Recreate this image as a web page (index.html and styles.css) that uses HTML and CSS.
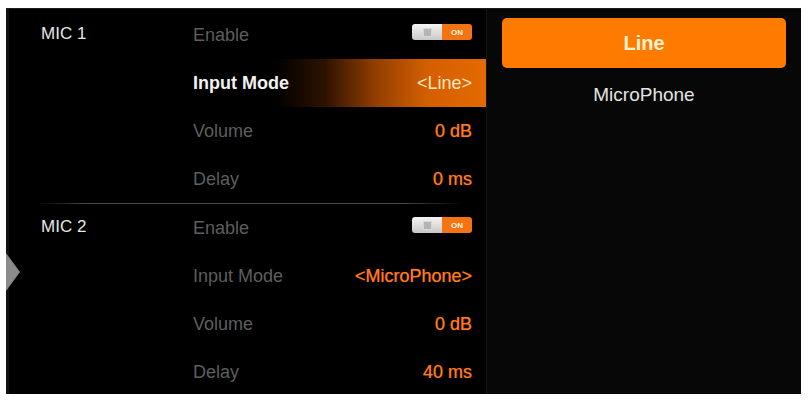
FILE: index.html
```html
<!DOCTYPE html>
<html lang="en">
<head>
    <meta charset="UTF-8">
    <meta name="viewport" content="width=device-width, initial-scale=1.0">
    <title>Audio Input Settings</title>
    <link rel="stylesheet" href="styles.css">
</head>
<body>
    <div class="screen">
        <div class="side-arrow"></div>

        <div class="settings">
            <div class="mic">
                <div class="mic-name">MIC 1</div>
                <div class="rows">
                    <div class="row">
                        <span class="label">Enable</span>
                        <span class="toggle"><span class="knob"><i></i></span><span class="on">ON</span></span>
                    </div>
                    <div class="row active">
                        <span class="label">Input Mode</span>
                        <span class="value">&lt;Line&gt;</span>
                    </div>
                    <div class="row">
                        <span class="label">Volume</span>
                        <span class="value">0 dB</span>
                    </div>
                    <div class="row">
                        <span class="label">Delay</span>
                        <span class="value">0 ms</span>
                    </div>
                </div>
            </div>

            <div class="divider"></div>

            <div class="mic">
                <div class="mic-name">MIC 2</div>
                <div class="rows">
                    <div class="row">
                        <span class="label">Enable</span>
                        <span class="toggle"><span class="knob"><i></i></span><span class="on">ON</span></span>
                    </div>
                    <div class="row">
                        <span class="label">Input Mode</span>
                        <span class="value">&lt;MicroPhone&gt;</span>
                    </div>
                    <div class="row">
                        <span class="label">Volume</span>
                        <span class="value">0 dB</span>
                    </div>
                    <div class="row">
                        <span class="label">Delay</span>
                        <span class="value">40 ms</span>
                    </div>
                </div>
            </div>
        </div>

        <div class="options">
            <div class="option selected">Line</div>
            <div class="option">MicroPhone</div>
        </div>
    </div>
</body>
</html>
```

FILE: styles.css
```css
body {
    margin: 0;
    background: #fff;
    font-family: "Liberation Sans", Arial, sans-serif;
}
.screen {
    position: relative;
    margin: 8px 8px 0 6px;
    width: 795px;
    height: 386px;
    background: #000;
    box-shadow: inset 3px 0 0 #121212;
    display: grid;
    grid-template-columns: 481px 1fr;
    overflow: hidden;
    border-top: 1px solid #1c1c1c;
    box-sizing: border-box;
}
.side-arrow {
    position: absolute;
    left: 0;
    top: 244px;
    width: 0;
    height: 0;
    border-top: 19px solid transparent;
    border-bottom: 19px solid transparent;
    border-left: 14px solid #8a8a8a;
}
.settings {
    padding-top: 2px;
    border-right: 1px solid #141414;
}
.mic {
    display: flex;
}
.mic-name {
    width: 152px;
    padding: 13px 0 0 35px;
    color: #e6e6e6;
    font-size: 17px;
}
.rows {
    flex: 1;
    display: flex;
    flex-direction: column;
}
.row {
    height: 48px;
    display: flex;
    align-items: center;
    justify-content: space-between;
    padding-right: 14px;
    font-size: 18px;
}
.label {
    color: #5e5e5e;
}
.value {
    color: #ff7d1e;
    text-shadow: 0 0 1px #c24a00;
}
.row.active {
    background: linear-gradient(90deg, rgba(0, 0, 0, 0) 28%, rgba(100, 40, 0, 0.45) 45%, rgba(170, 72, 0, 0.85) 62%, #d45f00 80%, #e46a00 100%);
}
.row.active .label {
    color: #f2f2f2;
    font-weight: bold;
}
.row.active .value {
    color: #ffe6c2;
    text-shadow: none;
}
.toggle {
    display: flex;
    width: 60px;
    height: 16px;
    margin-top: -6px;
    border-radius: 3px;
    overflow: hidden;
}
.knob {
    flex: 1;
    display: flex;
    align-items: center;
    justify-content: center;
    background: linear-gradient(180deg, #f4f4f4, #c8c8c8);
}
.knob i {
    width: 7px;
    height: 7px;
    background: #b4b4b4;
    border: 1px solid #d8d8d8;
}
.on {
    flex: 1;
    display: flex;
    align-items: center;
    justify-content: center;
    background: #f47414;
    color: #fff3df;
    font-size: 8px;
    font-weight: bold;
}
.divider {
    height: 1px;
    margin: 0 20px 0 30px;
    background: linear-gradient(90deg, rgba(80, 80, 80, 0), #4a4a4a 12%, #4a4a4a 85%, rgba(80, 80, 80, 0));
}
.options {
    padding: 9px 15px 0 15px;
    background: #070707;
}
.option {
    height: 50px;
    display: flex;
    align-items: center;
    justify-content: center;
    color: #e4e4e4;
    font-size: 19px;
}
.option.selected {
    margin-bottom: 2px;
    background: #ff7b00;
    border-radius: 5px;
    color: #fff3d2;
    font-size: 20px;
    font-weight: bold;
}
```
